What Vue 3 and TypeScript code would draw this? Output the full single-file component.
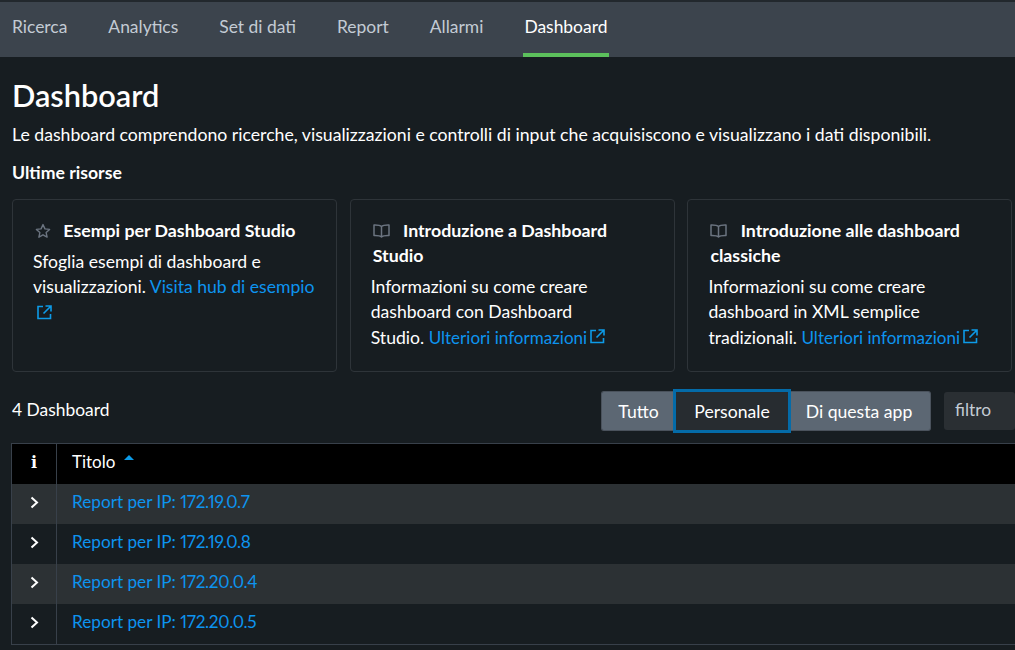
<script setup lang="ts">
interface Card { icon: 'star' | 'book'; title: string; text: string; link: string; inlineIcon: boolean }
const tabs = ['Ricerca', 'Analytics', 'Set di dati', 'Report', 'Allarmi', 'Dashboard']
const cards: Card[] = [
  { icon: 'star', title: 'Esempi per Dashboard Studio', text: 'Sfoglia esempi di dashboard e visualizzazioni.\u00a0', link: 'Visita hub di esempio', inlineIcon: false },
  { icon: 'book', title: 'Introduzione a Dashboard Studio', text: 'Informazioni su come creare dashboard con Dashboard Studio.\u00a0', link: 'Ulteriori informazioni', inlineIcon: true },
  { icon: 'book', title: 'Introduzione alle dashboard classiche', text: 'Informazioni su come creare dashboard in XML semplice tradizionali.\u00a0', link: 'Ulteriori informazioni', inlineIcon: true }
]
const rows = ['172.19.0.7', '172.19.0.8', '172.20.0.4', '172.20.0.5']
</script>

<template>
  <div class="page">
    <nav class="nav">
      <a v-for="t in tabs" :key="t" class="tab" :class="{ active: t === 'Dashboard' }">{{ t }}</a>
    </nav>
    <main class="main">
      <h1 class="title">Dashboard</h1>
      <p class="lead">Le dashboard comprendono ricerche, visualizzazioni e controlli di input che acquisiscono e visualizzano i dati disponibili.</p>
      <h2 class="sub">Ultime risorse</h2>
      <section class="cards">
        <article v-for="c in cards" :key="c.title" class="card">
          <h3 class="card-title">
            <svg v-if="c.icon === 'star'" class="ci star" viewBox="0 0 16 16" fill="none" stroke="#6b7480" stroke-width="1.4" stroke-linejoin="round"><path d="M8 1.6l1.95 4.3 4.65.5-3.45 3.15.95 4.6L8 11.8l-4.1 2.35.95-4.6L1.4 6.4l4.65-.5z"/></svg>
            <svg v-else class="ci book" viewBox="0 0 17 14" fill="none" stroke="#6b7480" stroke-width="1.5" stroke-linejoin="round"><path d="M8.5 2.6C7.2 1.2 4.5.9 1 1v10.6c3.5-.1 6.2.1 7.5 1.4 1.3-1.3 4-1.5 7.5-1.4V1c-3.5-.1-6.2.2-7.5 1.6zM8.5 2.6V13"/></svg>
            {{ c.title }}
          </h3>
          <p class="card-text">
            {{ c.text }}<a class="link nowrap" :class="{ tight: c.inlineIcon }">{{ c.link }}<svg v-if="c.inlineIcon" class="ext inl" viewBox="0 0 15 15" fill="none" stroke="#0d9be8" stroke-width="1.6"><path d="M6 1.5H1v12h12.5V9M8.5 1h5.5v5.5M14 1L6.5 8.5"/></svg></a>
            <svg v-if="!c.inlineIcon" class="ext" viewBox="0 0 15 15" fill="none" stroke="#0d9be8" stroke-width="1.6"><path d="M6 1.5H1v12h12.5V9M8.5 1h5.5v5.5M14 1L6.5 8.5"/></svg>
          </p>
        </article>
      </section>
      <div class="bar">
        <span class="count">4 Dashboard</span>
        <div class="seg">
          <button class="sb first">Tutto</button>
          <button class="sb on">Personale</button>
          <button class="sb last">Di questa app</button>
        </div>
        <div class="filter">filtro</div>
      </div>
      <div class="table">
        <div class="thead">
          <div class="c1 info">i</div>
          <div class="c2">Titolo <svg class="caret" viewBox="0 0 10 5"><path d="M5 0l5 5H0z" fill="#0c9be8"/></svg></div>
        </div>
        <div v-for="(r, i) in rows" :key="r" class="row" :class="{ odd: i % 2 === 0 }">
          <div class="c1"><svg class="chev" viewBox="0 0 9 13" fill="none" stroke="#fff" stroke-width="2"><path d="M1.5 1.5l5.5 5-5.5 5"/></svg></div>
          <div class="c2"><a class="link">Report per IP: <span class="ip">{{ r }}</span></a></div>
        </div>
      </div>
    </main>
  </div>
</template>

<style>
html, body { margin: 0; background: #171d21; overflow: hidden; }
</style>

<style scoped>
.page { width: 1015px; height: 650px; overflow: hidden; background: #171d21; color: #fff; font-family: Lato, "Liberation Sans", sans-serif; font-size: 17.5px; }
.nav { height: 57px; box-sizing: border-box; border-top: 2px solid #22282d; background: #3c444d; display: flex; padding-left: 10.5px; gap: 38px; }
.tab { display: flex; align-items: center; height: 49px; padding: 0 1.5px 2px; color: #c3cbd4; font-size: 17.45px; border-bottom: 4px solid transparent; }
.tab.active { color: #fff; border-bottom-color: #5cc05c; }
.main { padding: 0 0 0 12px; }
.title { margin: 22px 0 0; font-size: 30.7px; line-height: 34px; font-weight: 600; }
.lead { margin: 10px 0 0; font-size: 17.67px; line-height: 24px; white-space: nowrap; }
.sub { margin: 14px 0 0; font-size: 17.65px; line-height: 24px; font-weight: 700; }
.cards { margin-top: 14px; display: grid; grid-template-columns: 325px 325px 324.5px; gap: 12.7px; }
.card { height: 173px; box-sizing: border-box; border: 1px solid #2e3439; border-radius: 4px; padding: 18px 20px; }
.card-title { margin: 0; padding-left: 2px; font-size: 17.75px; line-height: 25px; font-weight: 700; }
.ci { width: 16px; height: 16px; vertical-align: -2px; margin: 0 8px 0 0; }
.ci.book { width: 17px; height: 14px; vertical-align: -1px; margin: 0 9px 0 0; }
.card-text { margin: 6px 0 0; font-size: 17.6px; line-height: 25.33px; color: #fff; }
.link { color: #0d94ef; }
.nowrap { white-space: nowrap; }
.tight { font-size: 17.05px; }
.ext { width: 15px; height: 15px; display: block; margin: 5px 0 0 4px; }
.ext.inl { display: inline-block; vertical-align: 0; margin: 0 0 0 3px; }
.bar { margin-top: 19px; height: 40px; display: flex; align-items: center; }
.count { font-size: 17.4px; flex: 0 0 589px; padding-bottom: 4px; }
.seg { display: flex; width: 330px; height: 40px; align-items: center; }
.sb { height: 40px; border: 1px solid #4a525c; background: #5c6773; color: #fff; font: inherit; font-size: 17.6px; padding: 0; }
.first { width: 72px; border-radius: 3px 0 0 3px; border-right: 0; padding-left: 2px; }
.on { width: 118px; height: 44px; background: #272c30; border: 3px solid #046ba8; }
.last { width: 140px; border-radius: 0 3px 3px 0; border-left: 0; padding-right: 3px; }
.filter { margin-left: 13px; width: 90px; height: 38px; box-sizing: border-box; background: #2a2f33; color: #c3cbd4; border-radius: 3px; padding: 0 11px; line-height: 36px; font-size: 17.4px; }
.table { margin: 12px 0 0 -1px; border: 1px solid #38404a; border-right: 0; width: 1010px; }
.thead, .row { display: flex; height: 40px; align-items: stretch; }
.thead { background: #000; font-size: 17px; }
.row { font-size: 17.2px; }
.row.odd { background: #2c3134; }
.c1 { width: 44px; border-right: 1px solid #38404a; display: flex; align-items: center; justify-content: center; padding-bottom: 3px; box-sizing: content-box; height: 37px; }
.c2 { padding: 0 0 6px 15px; display: flex; align-items: center; gap: 7px; }
.ip { font-variant-numeric: proportional-nums; letter-spacing: -0.3px; }
.info { font-family: "DejaVu Serif", serif; font-weight: 700; font-size: 16px; }
.caret { width: 10px; height: 5px; margin: -8px 0 0 2px; }
.chev { width: 9px; height: 13px; }
</style>
